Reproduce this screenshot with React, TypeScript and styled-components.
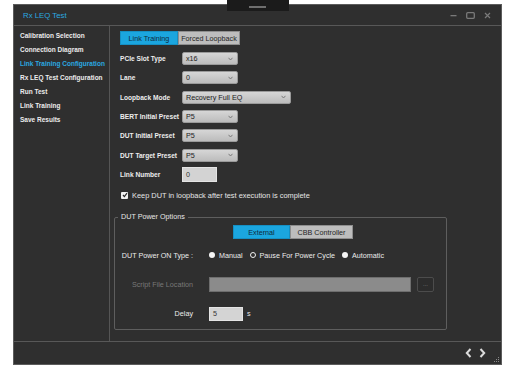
import React from 'react';
import styled, { createGlobalStyle } from 'styled-components';

const GlobalStyle = createGlobalStyle`
  html, body {
    margin: 0;
    padding: 0;
    background: #ffffff;
  }
  body {
    font-family: "Liberation Sans", Arial, sans-serif;
  }
`;

const Page = styled.div`
  position: relative;
  width: 515px;
  height: 369px;
  padding: 4px 0 0 13px;
  box-sizing: border-box;
`;

const Handle = styled.div`
  position: absolute;
  left: 227px;
  top: 0;
  width: 62px;
  height: 11px;
  background: #1b1b1b;

  &::after {
    content: '';
    position: absolute;
    left: 22px;
    top: 6px;
    width: 17px;
    height: 2px;
    background: #6f6f6f;
  }
`;

const Window = styled.div`
  width: 489px;
  height: 361px;
  box-sizing: border-box;
  border: 1px solid #5c5c5c;
  background: #2f2f2f;
  display: flex;
  flex-direction: column;
`;

const TitleBar = styled.div`
  height: 21px;
  box-sizing: border-box;
  border-bottom: 1px solid #585858;
  display: flex;
  align-items: center;
  padding-left: 9px;
  padding-right: 10px;
`;

const Title = styled.div`
  flex: 1;
  color: #2aa9e0;
  font-size: 7.8px;
`;

const WinControls = styled.div`
  display: flex;
  align-items: center;
  gap: 9px;
  color: #7a7a7a;
`;

const Body = styled.div`
  flex: 1;
  display: flex;
  min-height: 0;
`;

const Sidebar = styled.div`
  width: 96px;
  box-sizing: border-box;
  border-right: 1px solid #555;
  padding: 3px 0 0 6px;
  display: flex;
  flex-direction: column;
`;

const NavItem = styled.div<{ $active?: boolean }>`
  height: 14px;
  line-height: 14px;
  font-size: 6.5px;
  font-weight: bold;
  white-space: nowrap;
  color: ${(p) => (p.$active ? '#2aa9e0' : '#ececec')};
`;

const Main = styled.div`
  flex: 1;
  padding-top: 5px;
  display: flex;
  flex-direction: column;
`;

const Segmented = styled.div<{ $offset: number }>`
  display: flex;
  margin-left: ${(p) => p.$offset}px;
`;

const SegButton = styled.div<{ $on?: boolean; $w: number }>`
  width: ${(p) => p.$w}px;
  height: 14px;
  box-sizing: border-box;
  border: 1px solid ${(p) => (p.$on ? '#1590c4' : '#8e8e8e')};
  background: ${(p) => (p.$on ? '#1ba6df' : '#bdbdbd')};
  color: ${(p) => (p.$on ? '#0f2a3a' : '#252525')};
  font-size: 7.2px;
  display: flex;
  align-items: center;
  justify-content: center;
`;

const Form = styled.div`
  margin: 4px 0 0 10px;
  display: grid;
  grid-template-columns: 62px auto;
  grid-auto-rows: 19.3px;
  align-items: center;
`;

const Label = styled.div`
  color: #ededed;
  font-size: 6.6px;
  font-weight: bold;
  white-space: nowrap;
`;

const SelectBox = styled.div<{ $w: number }>`
  width: ${(p) => p.$w}px;
  height: 13px;
  box-sizing: border-box;
  border: 1px solid #9a9a9a;
  border-radius: 2px;
  background: linear-gradient(#d6d6d6, #bcbcbc);
  display: flex;
  align-items: center;
  justify-content: space-between;
  padding: 0 4px 0 3px;
  color: #222;
  font-size: 7.2px;
`;

const TextInput = styled.div<{ $w: number; $h: number; $bg: string }>`
  width: ${(p) => p.$w}px;
  height: ${(p) => p.$h}px;
  box-sizing: border-box;
  border: 1px solid #e4e4e4;
  background: ${(p) => p.$bg};
  color: #333;
  font-size: 7.2px;
  padding-left: 3px;
  display: flex;
  align-items: center;
`;

const CheckRow = styled.div`
  height: 22px;
  margin-left: 11px;
  display: flex;
  align-items: center;
  gap: 4px;
  color: #e6e6e6;
  font-size: 7.4px;
`;

const CheckBox = styled.div`
  width: 7px;
  height: 7px;
  background: #f2f2f2;
  border-radius: 1px;
  display: flex;
  align-items: center;
  justify-content: center;
`;

const Group = styled.fieldset`
  margin: 6px 0 0 4px;
  width: 333px;
  box-sizing: border-box;
  padding: 3px 0 0 0;
  border: 1px solid #5e5e5e;
  border-radius: 2px;
  min-width: 0;
`;

const Legend = styled.legend`
  margin-left: 3px;
  padding: 0 3px;
  font-size: 7.2px;
  line-height: 10px;
  color: #e6e6e6;
`;

const PowerGrid = styled.div`
  display: grid;
  grid-template-columns: 78px auto;
  grid-template-rows: 30px 28px 31px;
  column-gap: 16px;
  align-items: center;
  margin-top: 1px;
`;

const PowerLabel = styled.div<{ $muted?: boolean }>`
  text-align: right;
  font-size: 7.2px;
  white-space: nowrap;
  color: ${(p) => (p.$muted ? '#787878' : '#ececec')};
`;

const Radios = styled.div`
  display: flex;
  align-items: center;
  gap: 7px;
`;

const RadioItem = styled.div`
  display: flex;
  align-items: center;
  gap: 4px;
  color: #ececec;
  font-size: 7.2px;
`;

const RadioDot = styled.div<{ $ring?: boolean }>`
  width: 6px;
  height: 6px;
  border-radius: 50%;
  box-sizing: border-box;
  background: ${(p) => (p.$ring ? '#2f2f2f' : '#f5f5f5')};
  border: ${(p) => (p.$ring ? '1.5px solid #f0f0f0' : 'none')};
`;

const InlineRow = styled.div`
  display: flex;
  align-items: center;
  gap: 6px;
`;

const Browse = styled.div`
  width: 17px;
  height: 15px;
  box-sizing: border-box;
  border: 1px solid #4c4c4c;
  border-radius: 2px;
  background: #2c2c2c;
  color: #888;
  font-size: 6px;
  display: flex;
  align-items: center;
  justify-content: center;
`;

const Unit = styled.span`
  color: #e6e6e6;
  font-size: 7.2px;
  margin-left: -2px;
`;

const Footer = styled.div`
  height: 23px;
  box-sizing: border-box;
  border-top: 1px solid #585858;
  display: flex;
  align-items: center;
  justify-content: flex-end;
  padding-right: 1px;
`;

const NavArrows = styled.div`
  display: flex;
  gap: 7px;
  margin-right: 8px;
`;

const Grip = styled.div`
  align-self: flex-end;
  margin-bottom: 1px;
  display: flex;
`;

const Chevron = ({ dir }: { dir: 'left' | 'right' }) => (
  <svg width="7" height="10" viewBox="0 0 7 10">
    <path
      d={dir === 'left' ? 'M5.5 1 L1.8 5 L5.5 9' : 'M1.5 1 L5.2 5 L1.5 9'}
      fill="none"
      stroke="#dcdcdc"
      strokeWidth="2"
    />
  </svg>
);

const DropArrow = () => (
  <svg width="5" height="4" viewBox="0 0 5 4">
    <path d="M0.5 0.8 L2.5 3 L4.5 0.8" fill="none" stroke="#7a7a7a" strokeWidth="1" />
  </svg>
);

const Select = ({ value, width = 56 }: { value: string; width?: number }) => (
  <SelectBox $w={width}>
    <span>{value}</span>
    <DropArrow />
  </SelectBox>
);

const navItems = [
  'Calibration Selection',
  'Connection Diagram',
  'Link Training Configuration',
  'Rx LEQ Test Configuration',
  'Run Test',
  'Link Training',
  'Save Results',
];

export default function App() {
  return (
    <>
      <GlobalStyle />
      <Page>
        <Handle />
        <Window>
          <TitleBar>
            <Title>Rx LEQ Test</Title>
            <WinControls>
              <svg width="7" height="7" viewBox="0 0 7 7">
                <rect x="0.5" y="3" width="6" height="1.3" fill="#7a7a7a" />
              </svg>
              <svg width="9" height="7" viewBox="0 0 9 7">
                <rect x="0.7" y="0.7" width="7.6" height="5.6" rx="1" fill="none" stroke="#7a7a7a" strokeWidth="1.3" />
              </svg>
              <svg width="7" height="7" viewBox="0 0 7 7">
                <path d="M1 1 L6 6 M6 1 L1 6" stroke="#7a7a7a" strokeWidth="1.2" />
              </svg>
            </WinControls>
          </TitleBar>

          <Body>
            <Sidebar>
              {navItems.map((item) => (
                <NavItem key={item} $active={item === 'Link Training Configuration'}>
                  {item}
                </NavItem>
              ))}
            </Sidebar>

            <Main>
              <Segmented $offset={10}>
                <SegButton $on $w={58}>Link Training</SegButton>
                <SegButton $w={62}>Forced Loopback</SegButton>
              </Segmented>

              <Form>
                <Label>PCIe Slot Type</Label>
                <Select value="x16" />
                <Label>Lane</Label>
                <Select value="0" />
                <Label>Loopback Mode</Label>
                <Select value="Recovery Full EQ" width={109} />
                <Label>BERT Initial Preset</Label>
                <Select value="P5" />
                <Label>DUT Initial Preset</Label>
                <Select value="P5" />
                <Label>DUT Target Preset</Label>
                <Select value="P5" />
                <Label>Link Number</Label>
                <TextInput $w={35} $h={15} $bg="#d3d3d3">0</TextInput>
              </Form>

              <CheckRow>
                <CheckBox>
                  <svg width="6" height="6" viewBox="0 0 6 6">
                    <path d="M1 3 L2.4 4.6 L5 1.2" fill="none" stroke="#2a2a2a" strokeWidth="1.2" />
                  </svg>
                </CheckBox>
                Keep DUT in loopback after test execution is complete
              </CheckRow>

              <Group>
                <Legend>DUT Power Options</Legend>
                <Segmented $offset={118}>
                  <SegButton $on $w={57}>External</SegButton>
                  <SegButton $w={63}>CBB Controller</SegButton>
                </Segmented>
                <PowerGrid>
                  <PowerLabel>DUT Power ON Type :</PowerLabel>
                  <Radios>
                    <RadioItem>
                      <RadioDot />
                      Manual
                    </RadioItem>
                    <RadioItem>
                      <RadioDot $ring />
                      Pause For Power Cycle
                    </RadioItem>
                    <RadioItem>
                      <RadioDot />
                      Automatic
                    </RadioItem>
                  </Radios>

                  <PowerLabel $muted>Script File Location</PowerLabel>
                  <InlineRow>
                    <TextInput $w={202} $h={15} $bg="#8b8b8b" style={{ borderColor: '#6e6e6e' }} />
                    <Browse>...</Browse>
                  </InlineRow>

                  <PowerLabel>Delay</PowerLabel>
                  <InlineRow>
                    <TextInput $w={34} $h={14} $bg="#d4d4d4">5</TextInput>
                    <Unit>s</Unit>
                  </InlineRow>
                </PowerGrid>
              </Group>
            </Main>
          </Body>

          <Footer>
            <NavArrows>
              <Chevron dir="left" />
              <Chevron dir="right" />
            </NavArrows>
            <Grip>
              <svg width="6" height="6" viewBox="0 0 6 6">
                <rect x="4" y="0" width="1" height="1" fill="#888" />
                <rect x="2" y="2" width="1" height="1" fill="#888" />
                <rect x="4" y="2" width="1" height="1" fill="#888" />
                <rect x="0" y="4" width="1" height="1" fill="#888" />
                <rect x="2" y="4" width="1" height="1" fill="#888" />
                <rect x="4" y="4" width="1" height="1" fill="#888" />
              </svg>
            </Grip>
          </Footer>
        </Window>
      </Page>
    </>
  );
}
